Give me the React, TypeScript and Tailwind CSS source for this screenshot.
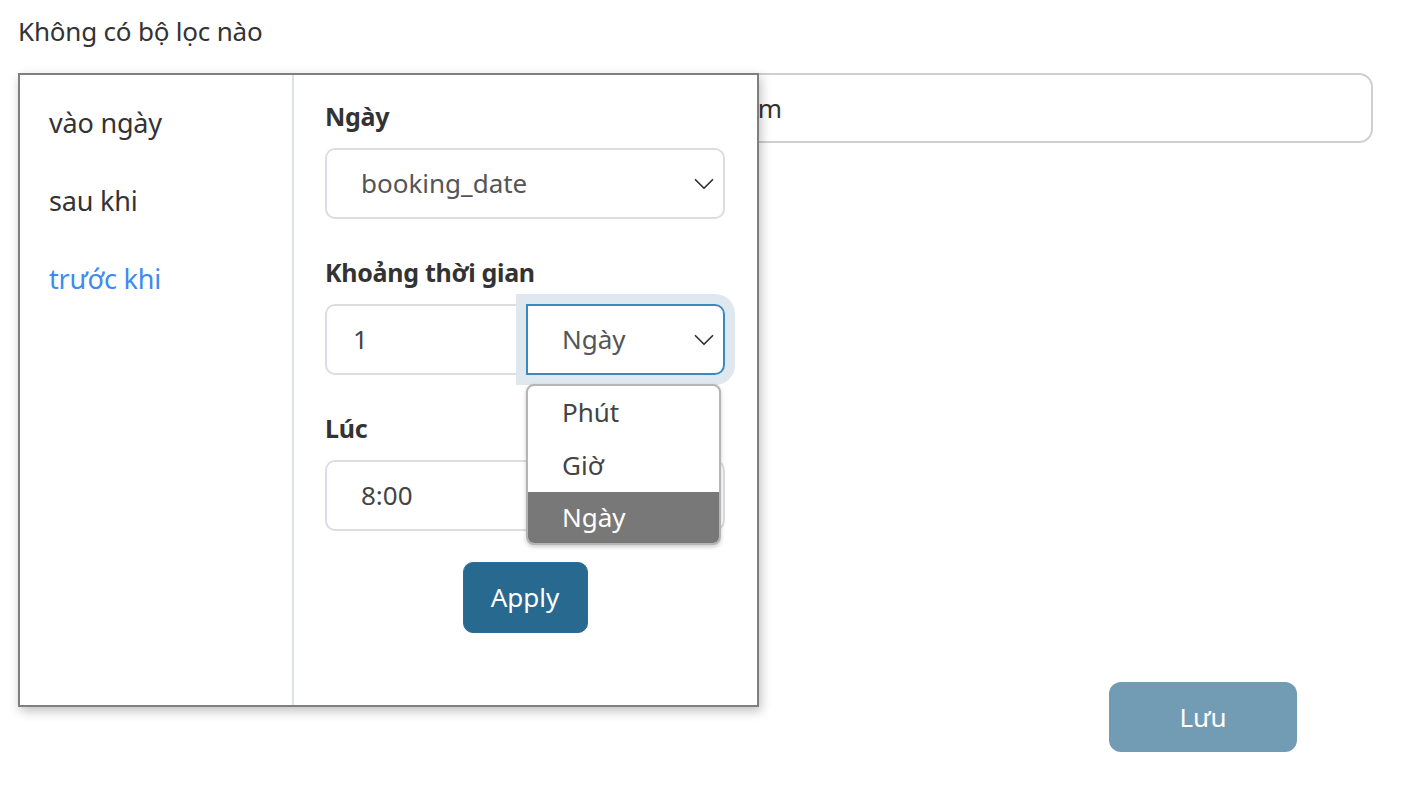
import { ChevronDown } from "lucide-react";

const font = { fontFamily: '"Noto Sans", "Open Sans", sans-serif' };

function Chevron() {
  return <ChevronDown className="h-[34px] w-[34px] text-[#333]" strokeWidth={1.2} aria-hidden="true" />;
}

export default function App() {
  const sides = ["vào ngày", "sau khi", "trước khi"];

  return (
    <div className="relative h-[791px] w-[1401px] bg-white text-[#333]" style={font}>
      <div className="px-[18px] pt-[13px] text-[26px] leading-[36px] tracking-[-0.2px]">Không có bộ lọc nào</div>

      {/* search field sitting behind the filter popup */}
      <div className="ml-[18px] mr-[28px] mt-[24px] flex h-[70px] items-center rounded-[14px] border-2 border-[#cfcfcf]">
        <div className="w-[762px] text-right text-[26px]">Tìm kiếm</div>
      </div>

      <div className="mt-[539px] flex pl-[1109px]">
        <button className="h-[70px] w-[188px] rounded-[12px] bg-[#729bb4] text-[26px] text-white">Lưu</button>
      </div>

      {/* filter popup */}
      <div className="absolute left-[18px] top-[73px] flex h-[634px] w-[741px] border-2 border-[#7f7f7f] bg-white shadow-[2px_4px_10px_rgba(0,0,0,0.25)]">
        <div className="flex w-[274px] flex-col gap-[39px] border-r-2 border-[#dde1ea] pl-[29px] pt-[28px]">
          {sides.map((s, i) => (
            <div
              key={s}
              className={
                i === 2
                  ? "text-[27px] leading-[39px] tracking-[-0.2px] text-[#3b8bf2]"
                  : "text-[27px] leading-[39px] tracking-[-0.2px] text-[#333]"
              }
            >
              {s}
            </div>
          ))}
        </div>

        <div className="relative flex-1 pl-[31px] pr-[32px] pt-[23px]">
          <div className="text-[25px] font-bold leading-[36px] tracking-[-0.3px] text-[#333]">Ngày</div>
          <div className="mt-[14px] flex h-[71px] items-center justify-between rounded-[10px] border-2 border-[#dcdde3] pl-[34px] pr-[2px]">
            <span className="text-[26px] text-[#555]">booking_date</span>
            <Chevron />
          </div>

          <div className="mt-[35px] text-[25px] font-bold leading-[36px] tracking-[-0.3px] text-[#333]">Khoảng thời gian</div>
          <div className="mt-[14px] flex h-[71px]">
            <div className="flex w-[201px] items-center rounded-l-[10px] border-2 border-r-0 border-[#dcdde3] pl-[26px] text-[26px] text-[#444]">
              1
            </div>
            <div className="flex flex-1 items-center justify-between rounded-r-[10px] border-2 border-[#3a8ac2] pl-[34px] pr-[2px] ring-[10px] ring-[#dfe8ee]">
              <span className="text-[26px] text-[#555]">Ngày</span>
              <Chevron />
            </div>
          </div>

          <div className="mt-[35px] text-[25px] font-bold leading-[36px] tracking-[-0.3px] text-[#333]">Lúc</div>
          <div className="mt-[14px] flex h-[71px] items-center rounded-[10px] border-2 border-[#dcdde3] pl-[34px] text-[26px] text-[#444]">
            8:00
          </div>

          <div className="mt-[31px] flex justify-center">
            <button className="h-[71px] w-[125px] rounded-[10px] border border-[#2e6c9e] bg-[#28698f] text-[26px] text-white">
              Apply
            </button>
          </div>

          {/* open select menu */}
          <div className="absolute left-[232px] top-[309px] w-[195px] overflow-hidden rounded-[8px] border-2 border-[#b5b5b5] bg-white shadow-[0_2px_4px_rgba(0,0,0,0.2)]">
            <div className="flex h-[53px] items-center pl-[34px] text-[26px] text-[#444]">Phút</div>
            <div className="flex h-[53px] items-center pl-[34px] text-[26px] text-[#444]">Giờ</div>
            <div className="flex h-[51px] items-center bg-[#787878] pl-[34px] text-[26px] text-white">Ngày</div>
          </div>
        </div>
      </div>
    </div>
  );
}
